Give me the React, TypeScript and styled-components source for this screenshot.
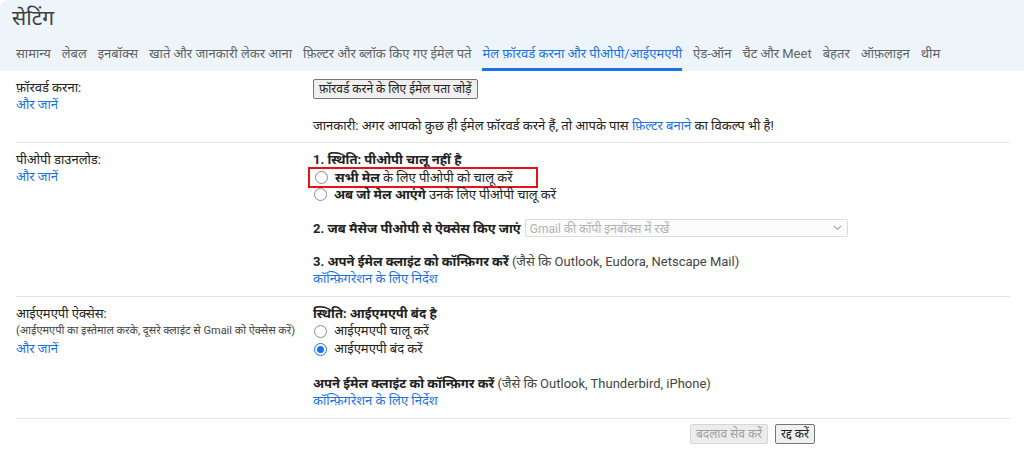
import styled, { createGlobalStyle } from 'styled-components';

const GlobalStyle = createGlobalStyle`
  html, body {
    margin: 0;
    padding: 0;
    background: #ffffff;
  }
  body {
    font-family: Roboto, "Noto Sans", "Liberation Sans", Arial, sans-serif;
    color: #222222;
    font-size: 13px;
  }
`;

const Page = styled.div`
  width: 1024px;
  height: 453px;
  overflow: hidden;
  background: #ffffff;
`;

const Header = styled.div`
  background: #eef5fa;
  border-top-left-radius: 8px;
  padding: 0 0 0 12px;
  height: 71px;
  display: flex;
  flex-direction: column;
`;

const Title = styled.h1`
  margin: 0;
  padding-top: 4px;
  font-size: 21px;
  font-weight: 400;
  color: #3c4043;
  line-height: 28px;
`;

const Tabs = styled.div`
  display: flex;
  gap: 11px;
  margin-top: 10px;
  padding-left: 4px;
`;

const Tab = styled.div<{ $active?: boolean }>`
  font-size: 13px;
  line-height: 18px;
  padding: 3px 0 5px;
  color: ${({ $active }) => ($active ? '#1a73e8' : '#5f6368')};
  border-bottom: 3px solid ${({ $active }) => ($active ? '#1a73e8' : 'transparent')};
  white-space: nowrap;
`;

const Content = styled.div`
  padding: 0 14px 0 16px;
`;

const Section = styled.div<{ $bottom: number }>`
  display: grid;
  grid-template-columns: 297px 1fr;
  border-bottom: 1px solid #e5e5e5;
  padding: 6px 0 ${({ $bottom }) => $bottom}px;
`;

const LabelCol = styled.div`
  display: flex;
  flex-direction: column;
  padding-top: 2px;
`;

const LabelTitle = styled.div`
  font-size: 13px;
  line-height: 17px;
  color: #222222;
`;

const LabelNote = styled.div`
  font-size: 11px;
  line-height: 18px;
  color: #444444;
`;

const Link = styled.a`
  color: #1a73e8;
  text-decoration: none;
  font-size: 13px;
  line-height: 17px;
`;

const ValueCol = styled.div`
  display: flex;
  flex-direction: column;
  padding-top: 2px;
`;

const Btn = styled.button<{ $disabled?: boolean }>`
  font-family: inherit;
  font-size: 12px;
  line-height: 16px;
  padding: 1px 5px;
  background: ${({ $disabled }) => ($disabled ? '#ececec' : '#efefef')};
  color: ${({ $disabled }) => ($disabled ? '#a0a0a0' : '#222222')};
  border: 1px solid ${({ $disabled }) => ($disabled ? '#d6d6d6' : '#767676')};
  border-radius: 2px;
  align-self: flex-start;
  cursor: pointer;
`;

const Para = styled.div<{ $gap?: number }>`
  font-size: 13px;
  line-height: 17px;
  color: #222222;
  margin-top: ${({ $gap }) => $gap ?? 0}px;
`;

const Strong = styled.span`
  font-weight: 700;
`;

const Hint = styled.span`
  color: #444444;
`;

const InlineLink = styled.span`
  color: #1a73e8;
`;

const RadioBox = styled.div<{ $highlight?: boolean; $tall?: boolean }>`
  display: flex;
  align-items: center;
  gap: 7px;
  font-size: 13px;
  line-height: ${({ $tall }) => ($tall ? '18px' : '17px')};
  margin-left: ${({ $highlight }) => ($highlight ? '-5px' : '0')};
  padding-left: ${({ $highlight }) => ($highlight ? '4px' : '0')};
  width: ${({ $highlight }) => ($highlight ? '222px' : 'auto')};
  border: ${({ $highlight }) => ($highlight ? '2px solid #e8101b' : 'none')};
  margin-top: ${({ $highlight }) => ($highlight ? '-1px' : '0')};
  margin-bottom: ${({ $highlight }) => ($highlight ? '-2px' : '0')};
`;

const RadioDot = styled.span<{ $checked?: boolean }>`
  width: 11px;
  height: 11px;
  border-radius: 50%;
  border: 1px solid ${({ $checked }) => ($checked ? '#1a73e8' : '#8a8a8a')};
  background: #ffffff;
  display: inline-flex;
  align-items: center;
  justify-content: center;
  flex-shrink: 0;
  margin-left: 1px;

  &::after {
    content: '';
    width: 7px;
    height: 7px;
    border-radius: 50%;
    background: ${({ $checked }) => ($checked ? '#1a73e8' : 'transparent')};
  }
`;

const SelectRow = styled.div`
  display: flex;
  align-items: center;
  gap: 4px;
  margin-top: 16px;
`;

const FakeSelect = styled.div`
  width: 312px;
  height: 16px;
  border: 1px solid #dcdcdc;
  border-radius: 2px;
  display: flex;
  align-items: center;
  justify-content: space-between;
  padding: 0 5px 0 4px;
  font-size: 12px;
  color: #b3b3b3;
  background: #fbfbfb;
`;

const Footer = styled.div`
  display: flex;
  justify-content: flex-start;
  gap: 7px;
  padding: 5px 0 0 674px;
`;

function Chevron() {
  return (
    <svg width="9" height="6" viewBox="0 0 9 6">
      <path d="M1 1l3.5 3.5L8 1" stroke="#a8a8a8" strokeWidth="1.2" fill="none" />
    </svg>
  );
}

const tabs = [
  'सामान्य',
  'लेबल',
  'इनबॉक्स',
  'खाते और जानकारी लेकर आना',
  'फ़िल्टर और ब्लॉक किए गए ईमेल पते',
  'मेल फ़ॉरवर्ड करना और पीओपी/आईएमएपी',
  'ऐड-ऑन',
  'चैट और Meet',
  'बेहतर',
  'ऑफ़लाइन',
  'थीम',
];

export default function App() {
  return (
    <Page>
      <GlobalStyle />
      <Header>
        <Title>सेटिंग</Title>
        <Tabs>
          {tabs.map((t) => (
            <Tab key={t} $active={t.startsWith('मेल फ़ॉरवर्ड')}>
              {t}
            </Tab>
          ))}
        </Tabs>
      </Header>
      <Content>
        <Section $bottom={8}>
          <LabelCol>
            <LabelTitle>फ़ॉरवर्ड करना:</LabelTitle>
            <Link>और जानें</Link>
          </LabelCol>
          <ValueCol>
            <Btn>फ़ॉरवर्ड करने के लिए ईमेल पता जोड़ें</Btn>
            <Para $gap={18}>
              जानकारी: अगर आपको कुछ ही ईमेल फ़ॉरवर्ड करने हैं, तो आपके पास{' '}
              <InlineLink>फ़िल्टर बनाने</InlineLink> का विकल्प भी है!
            </Para>
          </ValueCol>
        </Section>

        <Section $bottom={9}>
          <LabelCol>
            <LabelTitle>पीओपी डाउनलोड:</LabelTitle>
            <Link>और जानें</Link>
          </LabelCol>
          <ValueCol>
            <Para>
              <Strong>1. स्थिति: पीओपी चालू नहीं है</Strong>
            </Para>
            <RadioBox $highlight>
              <RadioDot />
              <span>
                <Strong>सभी मेल</Strong> के लिए पीओपी को चालू करें
              </span>
            </RadioBox>
            <RadioBox>
              <RadioDot />
              <span>
                <Strong>अब जो मेल आएंगे</Strong> उनके लिए पीओपी चालू करें
              </span>
            </RadioBox>
            <SelectRow>
              <Strong>2. जब मैसेज पीओपी से ऐक्सेस किए जाएं</Strong>
              <FakeSelect>
                <span>Gmail की कॉपी इनबॉक्स में रखें</span>
                <Chevron />
              </FakeSelect>
            </SelectRow>
            <Para $gap={16}>
              <Strong>3. अपने ईमेल क्लाइंट को कॉन्फ़िगर करें</Strong>{' '}
              <Hint>(जैसे कि Outlook, Eudora, Netscape Mail)</Hint>
            </Para>
            <Link>कॉन्फ़िगरेशन के लिए निर्देश</Link>
          </ValueCol>
        </Section>

        <Section $bottom={9}>
          <LabelCol>
            <LabelTitle>आईएमएपी ऐक्सेस:</LabelTitle>
            <LabelNote>(आईएमएपी का इस्तेमाल करके, दूसरे क्लाइंट से Gmail को ऐक्सेस करें)</LabelNote>
            <Link>और जानें</Link>
          </LabelCol>
          <ValueCol>
            <Para>
              <Strong>स्थिति: आईएमएपी बंद है</Strong>
            </Para>
            <RadioBox $tall>
              <RadioDot />
              <span>आईएमएपी चालू करें</span>
            </RadioBox>
            <RadioBox $tall>
              <RadioDot $checked />
              <span>आईएमएपी बंद करें</span>
            </RadioBox>
            <Para $gap={17}>
              <Strong>अपने ईमेल क्लाइंट को कॉन्फ़िगर करें</Strong>{' '}
              <Hint>(जैसे कि Outlook, Thunderbird, iPhone)</Hint>
            </Para>
            <Link>कॉन्फ़िगरेशन के लिए निर्देश</Link>
          </ValueCol>
        </Section>

        <Footer>
          <Btn $disabled>बदलाव सेव करें</Btn>
          <Btn>रद्द करें</Btn>
        </Footer>
      </Content>
    </Page>
  );
}
